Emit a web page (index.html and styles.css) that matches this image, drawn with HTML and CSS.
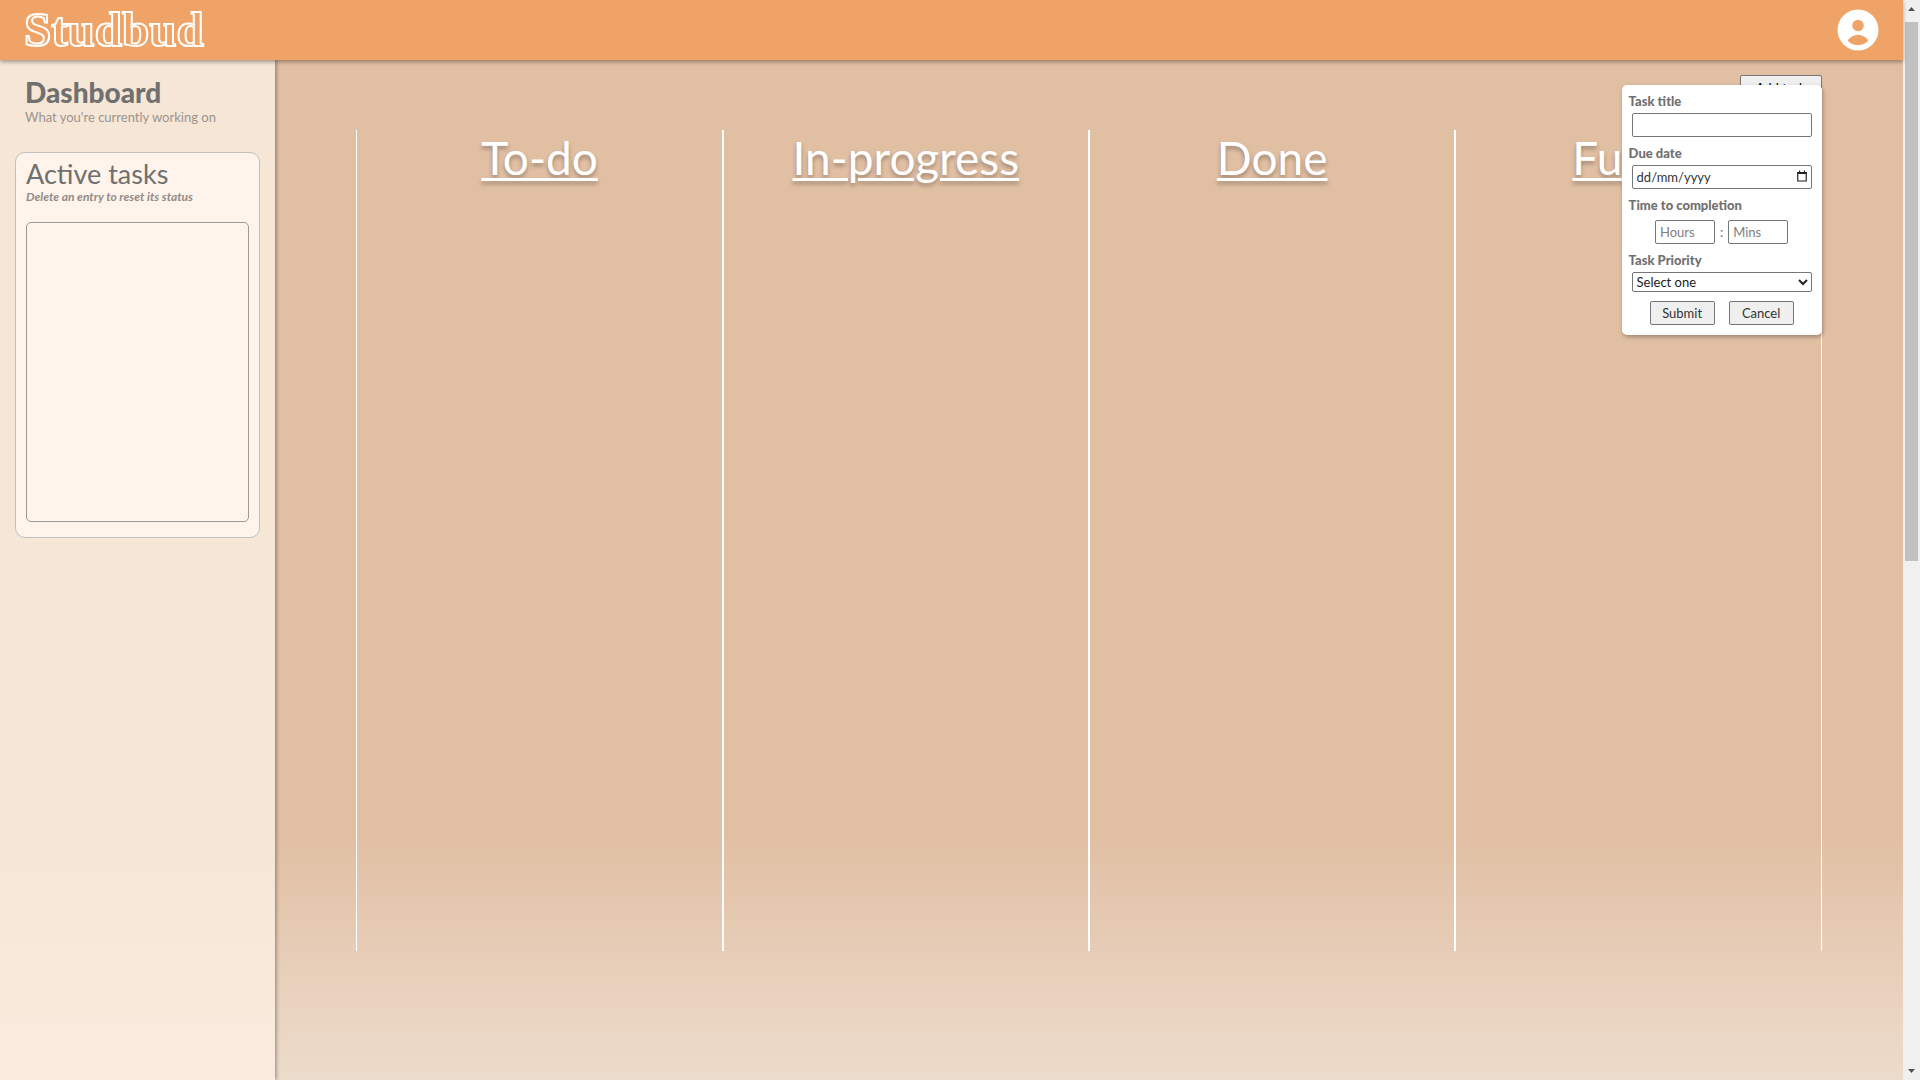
FILE: index.html
```html
<!DOCTYPE html>
<html lang="en-AU">
<head>
<meta charset="utf-8">
<meta name="viewport" content="width=device-width, initial-scale=1">
<title>Studbud</title>
<link rel="stylesheet" href="styles.css">
</head>
<body>
<div class="window">
  <div class="app">
    <header class="topbar">
      <a class="logo" href="#">Studbud</a>
      <button class="account" type="button" aria-label="Account">
        <svg viewBox="0 0 42 42" width="42" height="42" aria-hidden="true">
          <circle cx="21" cy="21" r="20.5" fill="#fff"/>
          <circle cx="21" cy="16.5" r="5.7" fill="#f0a366"/>
          <path d="M10.7 31.8C12.500 28.500 16 26 21 26s8.500 2.500 10.300 5.800C29 34.500 25 36.200 21 36.200s-8-1.700-10.300-4.400z" fill="#f0a366"/>
        </svg>
      </button>
    </header>
    <div class="layout">
      <aside class="sidebar">
        <h1 class="sidebar-title">Dashboard</h1>
        <p class="sidebar-subtitle">What you're currently working on</p>
        <section class="active">
          <h2 class="active-title">Active tasks</h2>
          <p class="active-hint">Delete an entry to reset its status</p>
          <div class="active-list"></div>
        </section>
      </aside>
      <main class="main">
        <div class="content">
          <div class="toolbar"><button class="control add-task" type="button">Add task</button></div>
          <div class="board">
            <section class="column"><h2 class="column-title">To-do</h2></section>
            <section class="column"><h2 class="column-title">In-progress</h2></section>
            <section class="column"><h2 class="column-title">Done</h2></section>
            <section class="column"><h2 class="column-title">Future</h2></section>
          </div>
          <form class="task-form">
            <label class="label" for="title">Task title</label>
            <input class="control field" id="title" type="text">
            <label class="label" for="due">Due date</label>
            <div class="date field">
              <input class="control date-input" id="due" type="text" placeholder="dd/mm/yyyy">
              <svg class="date-icon" viewBox="0 0 10 12" width="10" height="12" aria-hidden="true"><path d="M.75 2.500h8.500v8.500h-8.500z" fill="none" stroke="#222" stroke-width="1.200"/><path d="M.5 2h9v2h-9zM2 .5h1.200v2H2zM6.800.5H8v2H6.800z" fill="#222"/></svg>
            </div>
            <label class="label" for="hours">Time to completion</label>
            <div class="time">
              <input class="control time-input" id="hours" type="text" placeholder="Hours">
              <span>:</span>
              <input class="control time-input" type="text" placeholder="Mins" aria-label="Minutes">
            </div>
            <label class="label" for="priority">Task Priority</label>
            <select class="control field select" id="priority"><option>Select one</option><option>Low</option><option>Medium</option><option>High</option></select>
            <div class="actions">
              <button class="control action" type="submit">Submit</button>
              <button class="control action" type="button">Cancel</button>
            </div>
          </form>
        </div>
      </main>
    </div>
  </div>
  <div class="scrollbar" aria-hidden="true">
    <svg width="17" height="17" viewBox="0 0 17 17"><path d="M5 11l3.500-4 3.500 4z" fill="#505050"/></svg>
    <div class="scroll-track"><div class="scroll-thumb"></div></div>
    <svg width="17" height="17" viewBox="0 0 17 17"><path d="M5 6l3.500 4L12 6z" fill="#505050"/></svg>
  </div>
</div>
</body>
</html>
```
FILE: styles.css
```css
* { box-sizing: border-box; }
body { margin: 0; font-family: Lato, "Noto Sans", sans-serif; font-size: 13px; color: #707070; }
h1, h2, p { margin: 0; }
.window { display: flex; height: 100vh; overflow: hidden; }
.app { flex: 1; display: flex; flex-direction: column; }

.topbar {
  display: flex; align-items: center; justify-content: space-between;
  height: 60px; padding: 0 24px; background: #f0a366;
  box-shadow: 0 2px 4px rgba(0, 0, 0, .35); position: relative; z-index: 2;
}
.logo {
  font-family: "Liberation Serif", serif; font-size: 49px; line-height: 60px; font-weight: 700;
  color: transparent; -webkit-text-stroke: 2px #fff; text-decoration: none;
}
.account { padding: 0; border: 0; background: none; display: flex; }

.layout { flex: 1; display: flex; }
.sidebar {
  flex: none; width: 275px; padding: 15px;
  background: linear-gradient(#f6e6d6 75%, #faebde);
  box-shadow: 1px 0 4px rgba(0, 0, 0, .4); position: relative; z-index: 1;
}
.sidebar-title { padding-left: 10px; font-size: 28px; line-height: 34px; font-weight: 900; }
.sidebar-subtitle { padding-left: 10px; font-size: 13px; line-height: 16px; color: #9a948f; }
.active {
  margin-top: 27px; padding: 6px 10px 15px;
  border: 1px solid #bfbfbf; border-radius: 10px; background: #fff4eb;
}
.active-title { font-size: 27px; line-height: 30px; font-weight: 400; }
.active-hint { font-size: 12px; line-height: 16px; font-weight: 700; font-style: italic; color: #918b86; }
.active-list { height: 300px; margin-top: 17px; border: 1px solid #999; border-radius: 5px; }

.main {
  flex: 1; padding: 15px 0;
  background: linear-gradient(#e1bfa3 76%, #e8d0bb 90%, #ecdccb);
}
.content { width: 90%; margin: 0 auto; position: relative; }
.toolbar { display: flex; justify-content: flex-end; height: 55px; align-items: flex-start; }
.board { display: grid; grid-template-columns: repeat(4, 1fr); height: 76vh; }
.column { border: solid #fff; border-width: 0 1px; text-align: center; }
.column-title {
  font-size: 46px; line-height: 56px; font-weight: 400; color: #fff;
  text-decoration: underline 3px; text-underline-offset: 3px;
  text-shadow: 0 3px 4px rgba(0, 0, 0, .3);
}

.control {
  height: 24px; margin: 0; padding: 0 4px; font: inherit; color: #333;
  border: 1px solid #767676; border-radius: 2px; background: #fff;
}
.control::placeholder { color: #808080; opacity: 1; }
.add-task { width: 82px; height: 26px; background: #efefef; color: #000; }
.task-form {
  position: absolute; top: 10px; right: 0; width: 200px; padding: 7px 7px 10px;
  display: flex; flex-direction: column;
  background: #fff; border-radius: 5px; box-shadow: 1px 2px 4px rgba(0, 0, 0, .3);
}
.label { line-height: 18px; padding-bottom: 3px; font-weight: 900; }
.field { width: 180px; margin: 0 3px 7px; }
.date { position: relative; height: 24px; }
.date-input { width: 100%; }
.date-input::placeholder { color: #333; }
.date-icon { position: absolute; right: 5px; top: 5px; }
.time { display: flex; justify-content: center; align-items: center; gap: 5px; margin: 3px 0 7px; }
.time-input { width: 60px; }
.select { height: 20px; padding: 0; margin-bottom: 9px; color: #222; }
.actions { display: flex; justify-content: center; gap: 14px; }
.action { width: 65px; background: #efefef; }

.scrollbar { width: 17px; background: #f0f0f0; display: flex; flex-direction: column; }
.scrollbar svg { display: block; flex: none; }
.scroll-track { flex: 1; padding: 5px 2px; }
.scroll-thumb { height: 52%; background: #c1c1c1; }
```
